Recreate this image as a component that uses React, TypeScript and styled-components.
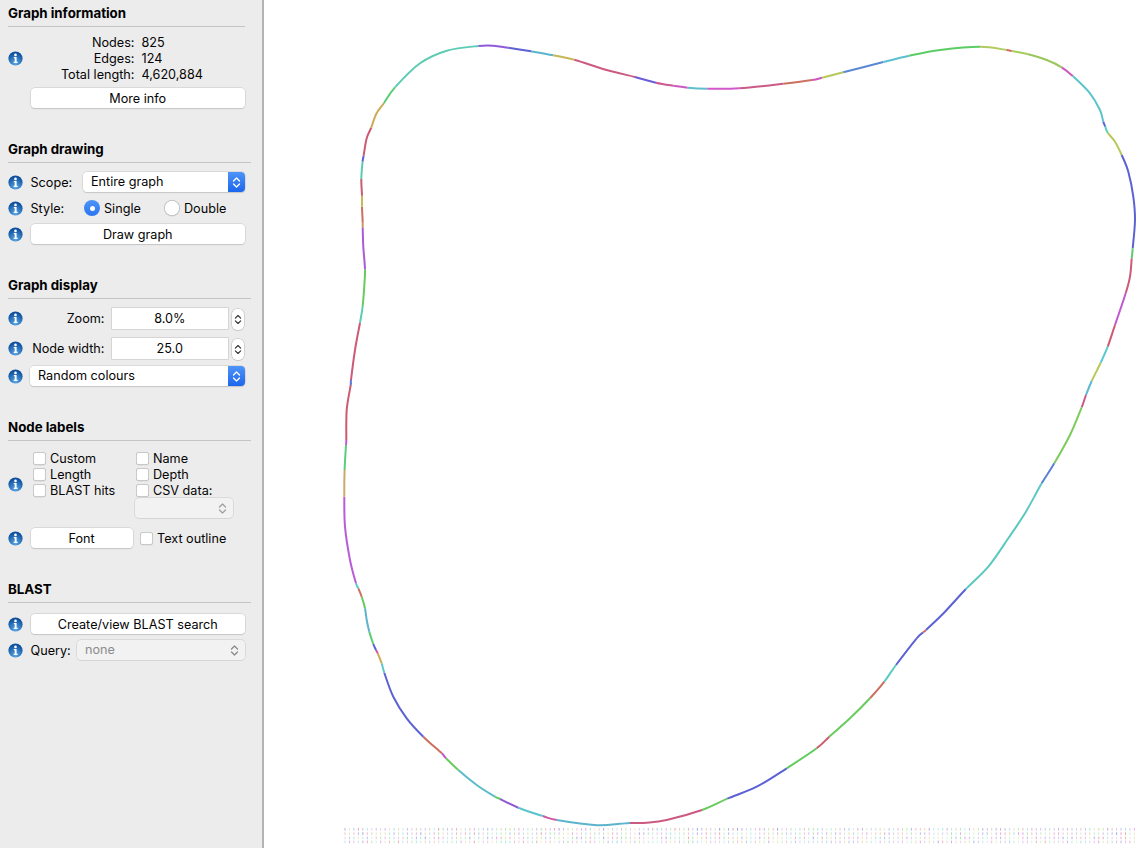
import React from "react";
import styled, { createGlobalStyle } from "styled-components";

const Global = createGlobalStyle`
  html, body { margin: 0; padding: 0; background: #fff; overflow: hidden; }
  body { font-family: Inter, "Liberation Sans", sans-serif; font-size: 12.65px; color: #050505; }
`;
const Window = styled.div`display: flex; width: 1148px; height: 848px; overflow: hidden;`;
const Sidebar = styled.aside`
  width: 264px; flex: none; box-sizing: border-box; height: 848px; padding: 5px 0 0 8px;
  background: #ececec; border-right: 2px solid #b4b4b4; display: flex; flex-direction: column;
`;
const Canvas = styled.svg`flex: 1; display: block; width: 884px; height: 848px; background: #fff;`;
const Section = styled.section<{ $first?: boolean }>`
  margin-top: ${(p) => (p.$first ? 0 : 33)}px; display: flex; flex-direction: column;
`;
const Heading = styled.h2<{ $short?: boolean }>`
  margin: 0; height: 21px; line-height: 17px; font-size: 13.3px; font-weight: 700; color: #000;
  box-sizing: content-box; border-bottom: 1px solid #c4c4c4; width: ${(p) => (p.$short ? 237 : 243)}px;
`;
const Row = styled.div<{ $gap?: number; $h?: number }>`
  display: flex; align-items: center; height: ${(p) => p.$h ?? 20}px; margin-top: ${(p) => p.$gap ?? 6}px;
`;
const Info = styled.svg`width: 15px; height: 15px; flex: none; display: block; margin-right: 7.5px;`;
const ButtonIndent = styled.span`width: 22.5px; flex: none;`;
const Stats = styled.div`
  display: grid; grid-template-columns: 104px auto; column-gap: 7px; grid-auto-rows: 16px; line-height: 16px; margin-top: 2px;
`;
const StatLabel = styled.span`text-align: right; white-space: nowrap;`;
const StatValue = styled.span`white-space: nowrap;`;
const Button = styled.button<{ $w?: number }>`
  width: ${(p) => p.$w ?? 214.5}px; height: 20px; flex: none; padding: 0; margin: 0; font: inherit; color: #050505;
  background: #fff; border: none; border-radius: 4px; text-align: center; line-height: 19px;
  box-shadow: 0 0 0 0.5px #c6c6c6, 0 1px 1px rgba(0,0,0,.16);
`;
const FieldLabel = styled.span<{ $w?: number; $right?: boolean }>`
  width: ${(p) => p.$w ?? 52}px; flex: none; text-align: ${(p) => (p.$right ? "right" : "left")}; white-space: nowrap;
`;
const Select = styled.div<{ $w: number; $disabled?: boolean; $pull?: boolean }>`
  position: relative; box-sizing: border-box; flex: none; width: ${(p) => p.$w}px; height: 20px; padding-left: 8.5px;
  margin-left: ${(p) => (p.$pull ? -1 : 0)}px;
  border-radius: 4px; line-height: 19px; white-space: nowrap;
  background: ${(p) => (p.$disabled ? "#f2f2f2" : "#fff")}; color: ${(p) => (p.$disabled ? "#8c8c8c" : "#050505")};
  box-shadow: 0 0 0 0.5px #c8c8c8, 0 ${(p) => (p.$disabled ? "0.5px 0.5px rgba(0,0,0,.08)" : "1px 1px rgba(0,0,0,.16)")};
`;
const SelectArrow = styled.span`
  position: absolute; right: 0; top: 0; bottom: 0; width: 17px; display: flex; align-items: center; justify-content: center;
  border-radius: 0 4px 4px 0; background: linear-gradient(#4f94f8, #1c66ec);
`;
const PlainArrow = styled.span`
  position: absolute; right: 2px; top: 0; bottom: 0; width: 17px; display: flex; align-items: center; justify-content: center;
`;
const Radios = styled.div`display: flex; align-items: center; margin-left: 1.5px;`;
const RadioItem = styled.label<{ $w: number }>`display: flex; align-items: center; width: ${(p) => p.$w}px; gap: 4px;`;
const RadioDot = styled.span<{ $on?: boolean }>`
  width: 16px; height: 16px; border-radius: 50%; box-sizing: border-box; flex: none; display: flex; align-items: center; justify-content: center;
  background: ${(p) => (p.$on ? "linear-gradient(#4f94f8,#2a76f0)" : "#fff")};
  box-shadow: ${(p) => (p.$on ? "none" : "inset 0 0 0 0.75px #b4b4b4, 0 0.5px 0.5px rgba(0,0,0,.1)")};
  &::after { content: ""; width: 5px; height: 5px; border-radius: 50%; background: ${(p) => (p.$on ? "#fff" : "transparent")}; }
`;
const NumberInput = styled.div`
  box-sizing: border-box; width: 116.5px; height: 21px; flex: none; margin-left: 7px; background: #fff; text-align: center; line-height: 21px;
  box-shadow: 0 0 0 0.5px #bdbdbd;
`;
const Stepper = styled.div`
  width: 12px; height: 21px; margin: 2px 0 0 4px; flex: none; background: #fff; border-radius: 5px; display: flex; align-items: center; justify-content: center;
  box-shadow: 0 0 0 0.5px #bcbcbc, 0 0.5px 1px rgba(0,0,0,.15);
`;
const LabelBlock = styled.div`display: flex; align-items: center; margin-top: 9px;`;
const CheckGrid = styled.div`
  display: grid; grid-template-columns: 103px auto; grid-template-rows: 16px 16px 16px 20px; margin-left: 2px;
`;
const CheckItem = styled.label`display: flex; align-items: center; gap: 4.5px; white-space: nowrap; line-height: 16px;`;
const CheckText = styled.span`padding-top: 2px;`;
const Box = styled.span`
  width: 13px; height: 13px; box-sizing: border-box; flex: none; background: #fff; border-radius: 3px;
  box-shadow: inset 0 0 0 0.75px #b8b8b8, 0 0.5px 0.5px rgba(0,0,0,.1);
`;
const CsvSelect = styled.div`grid-column: 2; grid-row: 4; margin-left: -1px;`;
const FontCheck = styled(CheckItem)`margin-left: 7px;`;

type Seg = { c: string; p: [number, number][] };
const segs: Seg[] = [
  { c: "#8f5ad8", p: [[478.3, 46], [493.3, 45.7], [508.3, 47.7]] },
  { c: "#5c62d4", p: [[531, 51.3]] },
  { c: "#5cb4cc", p: [[553.3, 55.3]] },
  { c: "#c8b858", p: [[574.3, 59.7]] },
  { c: "#cc5a80", p: [[606.7, 70], [635, 77]] },
  { c: "#6a5cd6", p: [[656, 82.7]] },
  { c: "#cc5a90", p: [[673.3, 85.7]] },
  { c: "#cc58c0", p: [[687.7, 87.7]] },
  { c: "#5cc0cc", p: [[707.3, 88.7]] },
  { c: "#d058cc", p: [[739.3, 88.3]] },
  { c: "#cc5a88", p: [[783.3, 83.7]] },
  { c: "#cc7060", p: [[812, 80]] },
  { c: "#d058bc", p: [[822, 77.7]] },
  { c: "#b8c858", p: [[843.3, 72.3]] },
  { c: "#5a88d4", p: [[883.3, 62]] },
  { c: "#5cc0d0", p: [[909.3, 55.7]] },
  { c: "#5ccc64", p: [[940, 50], [980, 46.7]] },
  { c: "#b0cc60", p: [[1006.7, 50]] },
  { c: "#dc5c5c", p: [[1011.7, 51]] },
  { c: "#a8cc5c", p: [[1027.3, 54]] },
  { c: "#98c85c", p: [[1046.7, 60], [1061.7, 67.3]] },
  { c: "#cc58bc", p: [[1072.7, 76]] },
  { c: "#5cc4cc", p: [[1090, 93.3], [1100, 110], [1103.3, 121.7]] },
  { c: "#5a62d8", p: [[1105.3, 126.7]] },
  { c: "#5cd0b8", p: [[1107.7, 132.7]] },
  { c: "#b8c858", p: [[1115, 141.7], [1121.7, 155]] },
  { c: "#5c62d4", p: [[1128.3, 171.7], [1133.3, 196.7], [1135, 220], [1132.7, 248.3]] },
  { c: "#5ccc74", p: [[1131.7, 258.3]] },
  { c: "#cc5a78", p: [[1130, 276.7], [1125.7, 293.3]] },
  { c: "#c058d0", p: [[1115, 325]] },
  { c: "#cc5a70", p: [[1107.7, 346.7]] },
  { c: "#5cc8d0", p: [[1100.7, 362.7]] },
  { c: "#b8c858", p: [[1091.7, 381]] },
  { c: "#5cb8d0", p: [[1086, 395]] },
  { c: "#cc5a88", p: [[1081.7, 407.3]] },
  { c: "#7ccc5c", p: [[1070, 435], [1054.3, 463.3]] },
  { c: "#5a80d4", p: [[1041.7, 483.3]] },
  { c: "#5cc8c0", p: [[1025, 513.3], [1008.3, 538.3], [988.3, 566.7], [965.7, 589.3]] },
  { c: "#5c62d4", p: [[945, 611.7], [926, 630]] },
  { c: "#cc6a70", p: [[923, 632.5]] },
  { c: "#5c62d4", p: [[916.7, 638.3]] },
  { c: "#5c62d4", p: [[896, 665]] },
  { c: "#5cccc0", p: [[884.3, 681.7]] },
  { c: "#cc7060", p: [[870, 698.3]] },
  { c: "#68cc5c", p: [[850, 718.3], [829.3, 736.7]] },
  { c: "#cc5a68", p: [[816.7, 748.3]] },
  { c: "#60cc5c", p: [[786.7, 768.3]] },
  { c: "#5c62d4", p: [[756.7, 786.7], [727.3, 798.7]] },
  { c: "#68cc5c", p: [[702, 810]] },
  { c: "#cc5a80", p: [[666.7, 820], [646.7, 822.7], [630, 823]] },
  { c: "#5cb4d0", p: [[620, 823.8]] },
  { c: "#5cb4cc", p: [[596.7, 825.2], [556.7, 820]] },
  { c: "#cc58a0", p: [[542.7, 816]] },
  { c: "#5cc4cc", p: [[518.3, 807.7]] },
  { c: "#9058d0", p: [[500, 799]] },
  { c: "#5ccc60", p: [[495, 796.7]] },
  { c: "#5cbccc", p: [[476.7, 785], [458.3, 770]] },
  { c: "#68cc5c", p: [[446, 758.3]] },
  { c: "#c058c8", p: [[441.7, 753.3]] },
  { c: "#cc7060", p: [[423.3, 736.7]] },
  { c: "#5c62d4", p: [[406.7, 718.3], [393.3, 696.7], [384.3, 672.7]] },
  { c: "#5cc8cc", p: [[381.7, 663.3]] },
  { c: "#ccaa58", p: [[377.7, 653.3]] },
  { c: "#cc58a0", p: [[376, 650]] },
  { c: "#5c62d4", p: [[373.3, 644]] },
  { c: "#5ccc70", p: [[369.3, 631.7]] },
  { c: "#5cb4cc", p: [[366.7, 620], [365, 608.3]] },
  { c: "#68cc5c", p: [[361.7, 596.7]] },
  { c: "#cc7060", p: [[358.3, 588.3]] },
  { c: "#5cc8cc", p: [[356, 583.3]] },
  { c: "#b85cd8", p: [[350, 560], [345, 526.7], [344.3, 496.7]] },
  { c: "#ccaa68", p: [[344.6, 470]] },
  { c: "#5ccc80", p: [[346, 445]] },
  { c: "#c058d8", p: [[346.3, 440]] },
  { c: "#cc5a70", p: [[346.7, 410], [350.7, 385]] },
  { c: "#5a70d4", p: [[351, 380]] },
  { c: "#cc5a78", p: [[355, 350], [360, 322.7]] },
  { c: "#5cccb0", p: [[362.7, 306]] },
  { c: "#68cc5c", p: [[364.3, 285.7], [365, 269.3]] },
  { c: "#a85cd8", p: [[363.3, 246.7], [362.7, 227.3]] },
  { c: "#cc9a50", p: [[362.7, 222.7]] },
  { c: "#cc7060", p: [[362, 206.7]] },
  { c: "#c8b858", p: [[362, 195.7]] },
  { c: "#cc5a70", p: [[361.3, 179]] },
  { c: "#5cccb0", p: [[362.6, 161.7]] },
  { c: "#5a62d4", p: [[363.6, 155.7]] },
  { c: "#cc5a70", p: [[366.7, 138.3], [371.2, 127.7]] },
  { c: "#ccaa58", p: [[376.2, 114], [384, 103]] },
  { c: "#5ccc74", p: [[395, 87.3]] },
  { c: "#5cccb4", p: [[420, 63.3], [446.7, 50.7], [478.3, 46]] },
];

function buildPaths() {
  const all: [number, number][] = [];
  const ranges: { c: string; a: number; b: number }[] = [];
  segs.forEach((s, i) => {
    const a = i === 0 ? 0 : all.length - 1;
    all.push(...s.p);
    ranges.push({ c: s.c, a, b: all.length - 1 });
  });
  const n = all.length - 1;
  const at = (i: number) => all[((i % n) + n) % n];
  return ranges.map(({ c, a, b }) => {
    let d = `M${all[a][0]} ${all[a][1]}`;
    for (let i = a; i < b; i++) {
      const p0 = at(i - 1), p1 = at(i), p2 = at(i + 1), p3 = at(i + 2);
      const c1 = [p1[0] + (p2[0] - p0[0]) / 6, p1[1] + (p2[1] - p0[1]) / 6];
      const c2 = [p2[0] - (p3[0] - p1[0]) / 6, p2[1] - (p3[1] - p1[1]) / 6];
      d += `C${c1[0].toFixed(1)} ${c1[1].toFixed(1)} ${c2[0].toFixed(1)} ${c2[1].toFixed(1)} ${p2[0]} ${p2[1]}`;
    }
    return { c, d };
  });
}
const paths = buildPaths();

const rowYs = [828, 832.3, 836.6, 840.6];
const hues = [0, 45, 120, 180, 210, 240, 270, 300, 330, 90, 160];
function buildTicks() {
  const out: { x: number; y: number; c: string; o: number }[] = [];
  let seed = 7;
  const rnd = () => { seed = (seed * 9301 + 49297) % 233280; return seed / 233280; };
  rowYs.forEach((y, r) => {
    for (let x = 344.5; x < 1135; x += 4.46) {
      const h = hues[Math.floor(rnd() * hues.length)];
      out.push({ x, y, c: `hsl(${h},60%,62%)`, o: 0.32 + rnd() * 0.3 - r * 0.02 });
    }
  });
  return out;
}
const ticks = buildTicks();

const InfoIcon = () => (
  <Info viewBox="0 0 15 15" aria-hidden>
    <defs>
      <radialGradient id="ib" cx="50%" cy="85%" r="75%">
        <stop offset="0" stopColor="#5aa8e8" />
        <stop offset="1" stopColor="#0d4f9c" />
      </radialGradient>
    </defs>
    <circle cx="7.5" cy="7.5" r="7.1" fill="url(#ib)" />
    <circle cx="7.5" cy="3.9" r="1.3" fill="#fff" />
    <path d="M5.8 6.1h2.8v4.7h1v1.1H5.7v-1.1h1V7.2h-.9z" fill="#fff" />
  </Info>
);
const Chevrons = ({ color = "#fff", w = 9, h = 13 }: { color?: string; w?: number; h?: number }) => (
  <svg width={w} height={h} viewBox="0 0 9 13" fill="none" stroke={color} strokeWidth="1.3" strokeLinecap="round" strokeLinejoin="round" aria-hidden>
    <path d="M1.5 5 4.5 2l3 3M1.5 8l3 3 3-3" />
  </svg>
);

export default function App() {
  return (
    <Window>
      <Global />
      <Sidebar>
        <Section $first>
          <Heading $short>Graph information</Heading>
          <Row $gap={7} $h={48}>
            <InfoIcon />
            <Stats>
              <StatLabel>Nodes:</StatLabel><StatValue>825</StatValue>
              <StatLabel>Edges:</StatLabel><StatValue>124</StatValue>
              <StatLabel>Total length:</StatLabel><StatValue>4,620,884</StatValue>
            </Stats>
          </Row>
          <Row $gap={6}><ButtonIndent /><Button>More info</Button></Row>
        </Section>
        <Section>
          <Heading>Graph drawing</Heading>
          <Row $gap={9}>
            <InfoIcon />
            <FieldLabel>Scope:</FieldLabel>
            <Select $w={162.5}>Entire graph<SelectArrow><Chevrons /></SelectArrow></Select>
          </Row>
          <Row>
            <InfoIcon />
            <FieldLabel>Style:</FieldLabel>
            <Radios>
              <RadioItem $w={80}><RadioDot $on />Single</RadioItem>
              <RadioItem $w={80}><RadioDot />Double</RadioItem>
            </Radios>
          </Row>
          <Row><InfoIcon /><Button>Draw graph</Button></Row>
        </Section>
        <Section>
          <Heading>Graph display</Heading>
          <Row $gap={8.5} $h={21}>
            <InfoIcon />
            <FieldLabel $w={74} $right>Zoom:</FieldLabel>
            <NumberInput>8.0%</NumberInput>
            <Stepper><Chevrons color="#333" w={8} h={13} /></Stepper>
          </Row>
          <Row $gap={9} $h={21}>
            <InfoIcon />
            <FieldLabel $w={74} $right>Node width:</FieldLabel>
            <NumberInput>25.0</NumberInput>
            <Stepper><Chevrons color="#333" w={8} h={13} /></Stepper>
          </Row>
          <Row $gap={7.5}>
            <InfoIcon />
            <Select $w={215.5} $pull>Random colours<SelectArrow><Chevrons /></SelectArrow></Select>
          </Row>
        </Section>
        <Section>
          <Heading>Node labels</Heading>
          <LabelBlock>
            <InfoIcon />
            <CheckGrid>
              <CheckItem><Box /><CheckText>Custom</CheckText></CheckItem>
              <CheckItem><Box /><CheckText>Name</CheckText></CheckItem>
              <CheckItem><Box /><CheckText>Length</CheckText></CheckItem>
              <CheckItem><Box /><CheckText>Depth</CheckText></CheckItem>
              <CheckItem><Box /><CheckText>BLAST hits</CheckText></CheckItem>
              <CheckItem><Box /><CheckText>CSV data:</CheckText></CheckItem>
              <CsvSelect>
                <Select $w={98} $disabled><PlainArrow><Chevrons color="#a0a0a0" /></PlainArrow></Select>
              </CsvSelect>
            </CheckGrid>
          </LabelBlock>
          <Row $gap={10}>
            <InfoIcon />
            <Button $w={102}>Font</Button>
            <FontCheck><Box /><CheckText>Text outline</CheckText></FontCheck>
          </Row>
        </Section>
        <Section>
          <Heading>BLAST</Heading>
          <Row $gap={11}><InfoIcon /><Button>Create/view BLAST search</Button></Row>
          <Row>
            <InfoIcon />
            <FieldLabel $w={46}>Query:</FieldLabel>
            <Select $w={168.5} $disabled>none<PlainArrow><Chevrons color="#8a8a8a" /></PlainArrow></Select>
          </Row>
        </Section>
      </Sidebar>
      <Canvas viewBox="264 0 884 848" aria-hidden>
        {paths.map((s, i) => (
          <path key={i} d={s.d} fill="none" stroke={s.c} strokeWidth="2" />
        ))}
        {ticks.map((t, i) => (
          <rect key={i} x={t.x} y={t.y} width="1" height="2.6" fill={t.c} opacity={t.o} />
        ))}
      </Canvas>
    </Window>
  );
}
